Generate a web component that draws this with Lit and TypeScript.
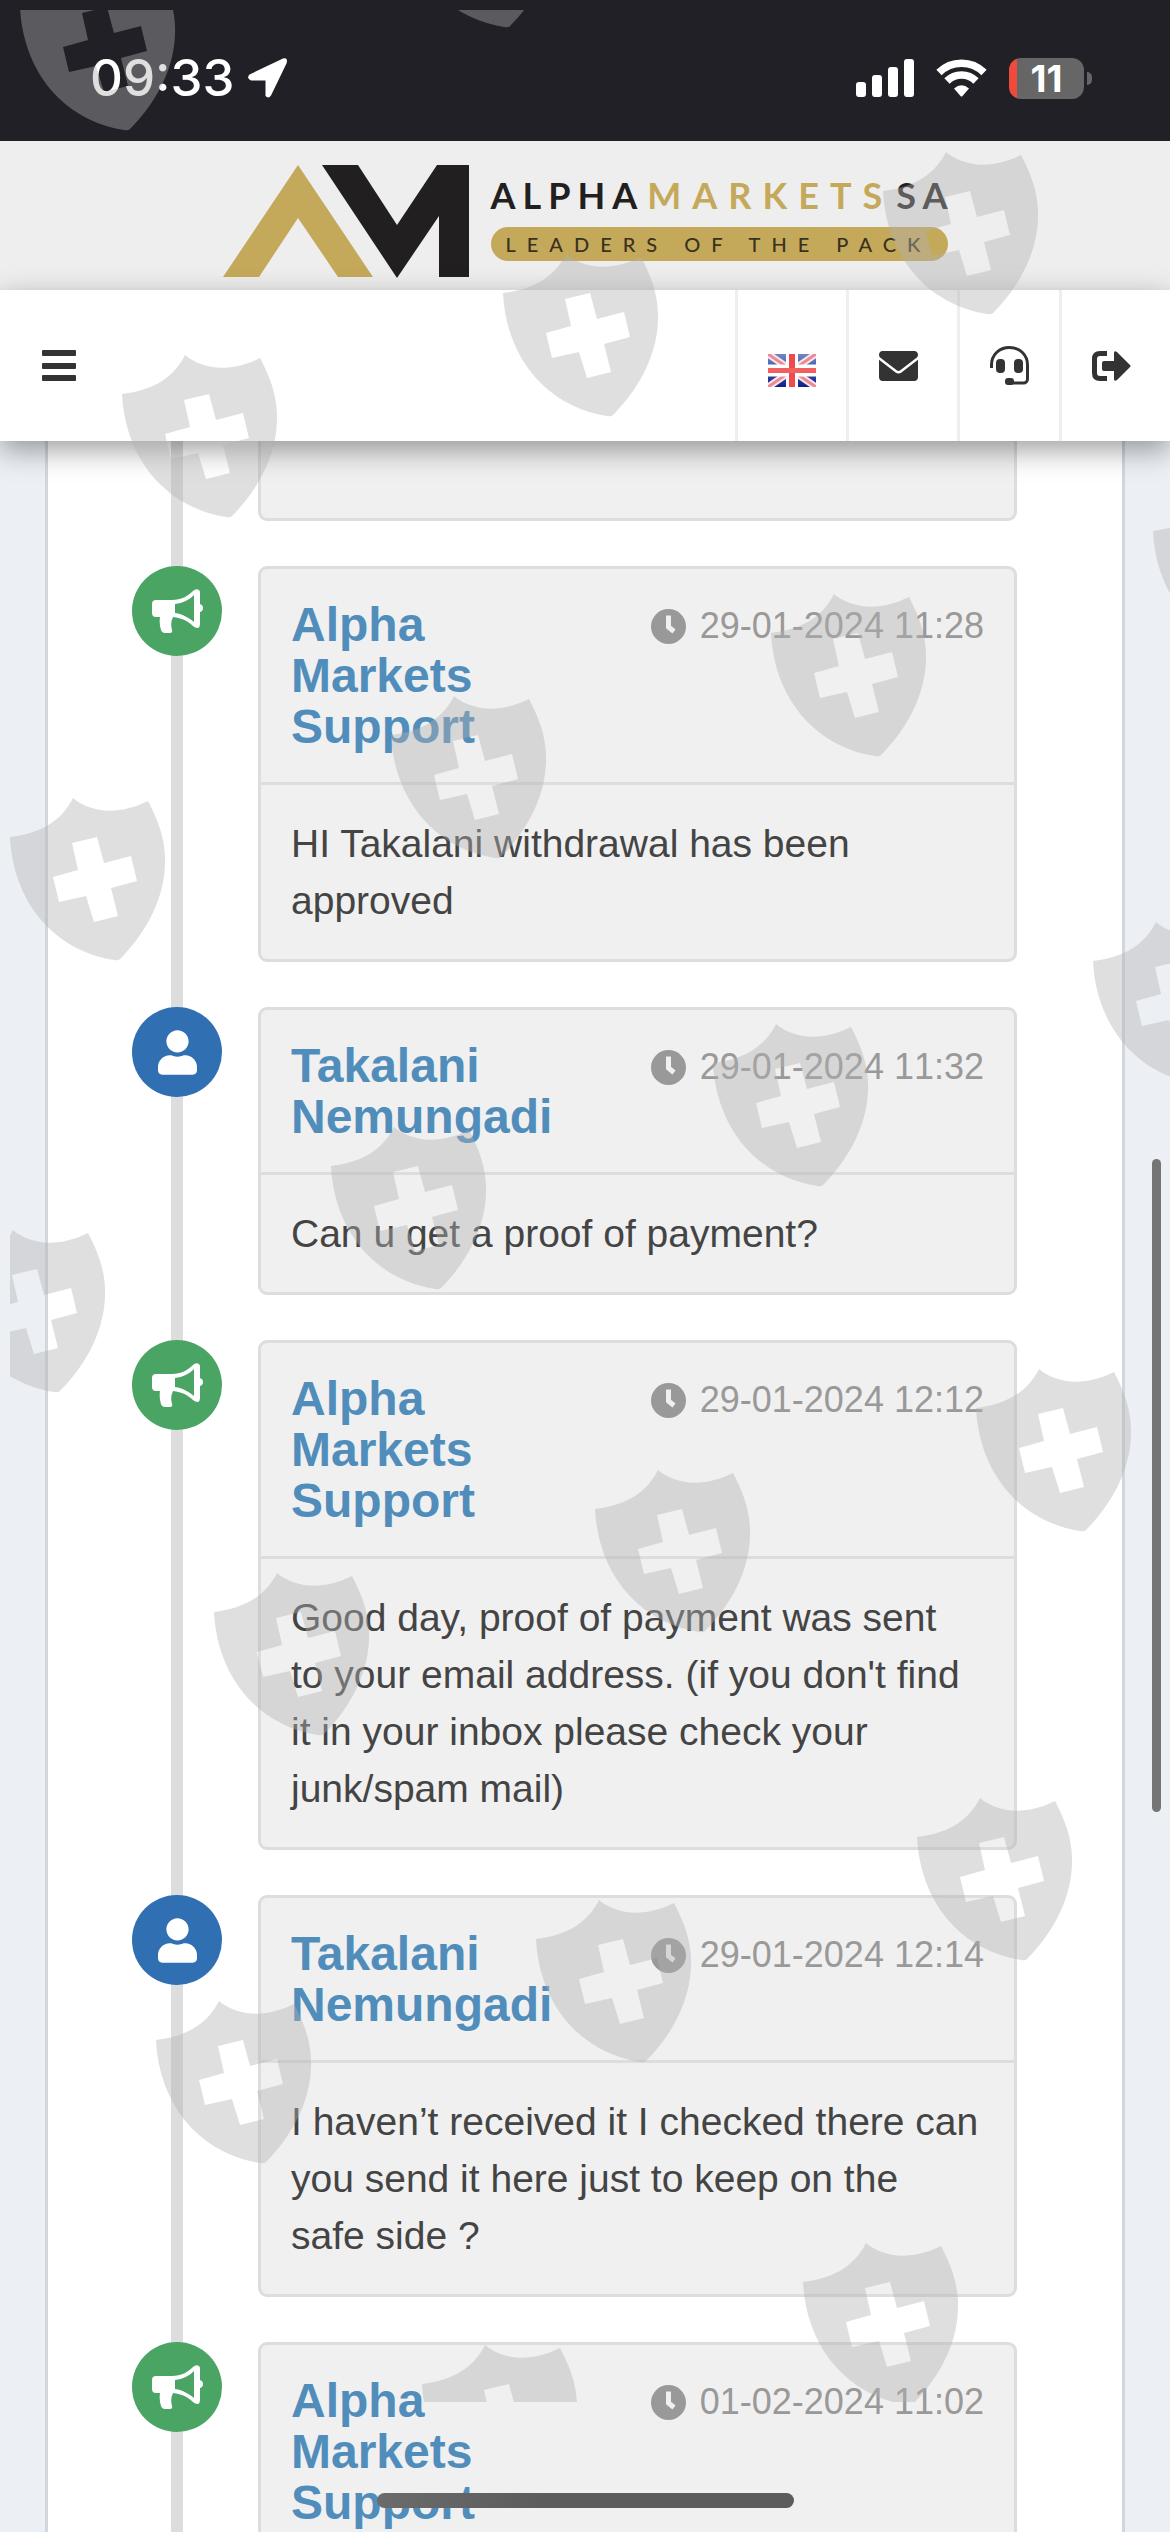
import { LitElement, html, svg, css } from "lit";
import { customElement, property } from "lit/decorators.js";

type Role = "support" | "client";

interface Message {
  role: Role;
  author: string;
  time: string;
  text: string;
}

const messages: Message[] = [
  {
    role: "support",
    author: "Alpha Markets Support",
    time: "29-01-2024 11:28",
    text: "HI Takalani withdrawal has been approved",
  },
  {
    role: "client",
    author: "Takalani Nemungadi",
    time: "29-01-2024 11:32",
    text: "Can u get a proof of payment?",
  },
  {
    role: "support",
    author: "Alpha Markets Support",
    time: "29-01-2024 12:12",
    text: "Good day, proof of payment was sent\nto your email address. (if you don't find\nit in your inbox please check your\njunk/spam mail)",
  },
  {
    role: "client",
    author: "Takalani Nemungadi",
    time: "29-01-2024 12:14",
    text: "I haven’t received it I checked there can\nyou send it here just to keep on the\nsafe side ?",
  },
  {
    role: "support",
    author: "Alpha Markets Support",
    time: "01-02-2024 11:02",
    text: "",
  },
];

const SHIELD =
  "M0 39C26 36 50 26 63 0C78 13 106 19 138 3C148 22 156 42 155 66C154 106 131 140 110 161Q108 163 104 162C42 152 3 102 0 39Z" +
  "M62 45L87 39L94 65L121 58L127 83L101 90L108 118L84 124L76 98L49 104L43 79L68 72Z";

/* Upper left corner of every shield of the watermark. */
const shields: Array<[number, number]> = [
  [20, -32], [400, -135], [883, 152], [503, 254], [122, 355],
  [1153, 492], [771, 594], [391, 696], [10, 798], [1093, 922],
  [713, 1024], [331, 1127], [-50, 1230], [976, 1369], [595, 1470],
  [214, 1573], [917, 1798], [536, 1900], [156, 2001], [803, 2243],
  [422, 2345],
];

@customElement("shield-watermark")
export class ShieldWatermark extends LitElement {
  static styles = css`
    :host {
      display: block;
      position: absolute;
      inset: 0;
      pointer-events: none;
    }
    .field {
      display: block;
      width: 100%;
      height: 100%;
      fill: #b1b1b1;
      fill-opacity: 0.41;
    }
  `;

  render() {
    return html`
      <svg class="field" aria-hidden="true">
        <defs>
          <clipPath id="area"><rect x="10" y="10" width="4000" height="2392" /></clipPath>
        </defs>
        <g clip-path="url(#area)" fill-rule="evenodd">
          ${shields.map(([x, y]) => svg`<path transform="translate(${x} ${y})" d=${SHIELD} />`)}
        </g>
      </svg>
    `;
  }
}

@customElement("status-bar")
export class StatusBar extends LitElement {
  static styles = css`
    :host {
      display: flex;
      align-items: center;
      justify-content: space-between;
      box-sizing: border-box;
      height: 141px;
      padding: 15px 78px 0 90px;
      background: #202026;
      color: #fff;
      font-family: Inter, "Liberation Sans", sans-serif;
    }
    .side {
      display: flex;
      align-items: center;
    }
    .time {
      margin-right: 14px;
      font-size: 51px;
      line-height: 60px;
      font-weight: 500;
    }
    .signal {
      margin-right: 22px;
    }
    .wifi {
      margin-right: 22px;
    }
    .battery {
      display: flex;
      align-items: center;
      justify-content: center;
      width: 75px;
      height: 41px;
      border-radius: 12px;
      background: linear-gradient(90deg, #f04b3a 8px, #666 8px);
      font-size: 37px;
      line-height: 41px;
      font-weight: 700;
    }
    .nub {
      width: 5px;
      height: 13px;
      margin-left: 3px;
      border-radius: 0 6px 6px 0;
      background: #666;
    }
    svg {
      display: block;
    }
  `;

  render() {
    return html`
      <div class="side">
        <span class="time">09:33</span>
        <svg width="39" height="40" viewBox="0 0 39 40" fill="#fff" aria-hidden="true">
          <path d="M35 .4Q40 -1 38.700 5L23 37.500Q20.500 41 17.500 38V22.500H3Q-2 20 1.500 16.500Z" />
        </svg>
      </div>
      <div class="side">
        <svg class="signal" width="58" height="38" viewBox="0 0 58 38" fill="#fff" aria-hidden="true">
          <rect x="0" y="23" width="10" height="15" rx="3" />
          <rect x="16" y="16" width="10" height="22" rx="3" />
          <rect x="32" y="8" width="10" height="30" rx="3" />
          <rect x="48" y="0" width="10" height="38" rx="3" />
        </svg>
        <svg class="wifi" width="51" height="38" viewBox="0 0 51 38" aria-hidden="true">
          <g fill="none" stroke="#fff" stroke-width="7.500">
            <path d="M3 13.500A32 32 0 0 1 48 13.500" />
            <path d="M11 22A20.500 20.500 0 0 1 40 22" />
          </g>
          <path fill="#fff" d="M18 29.500Q25.500 23 33 29.500L26.500 37Q25.500 38 24.500 37Z" />
        </svg>
        <span class="battery">11</span>
        <span class="nub"></span>
      </div>
    `;
  }
}

@customElement("brand-header")
export class BrandHeader extends LitElement {
  static styles = css`
    :host {
      display: flex;
      align-items: center;
      justify-content: center;
      gap: 22px;
      box-sizing: border-box;
      height: 149px;
      padding-top: 13px;
      background: #eee;
      font-family: Lato, "Liberation Sans", sans-serif;
      color: #221f20;
    }
    .mark {
      display: block;
      margin-bottom: 2px;
    }
    .words {
      display: flex;
      flex-direction: column;
      gap: 12px;
      width: 457px;
      margin-bottom: 8px;
    }
    .name {
      display: flex;
      justify-content: space-between;
      font-size: 36px;
      line-height: 40px;
      font-weight: 700;
      letter-spacing: 7px;
      white-space: nowrap;
    }
    .gold {
      color: #c5a95a;
      letter-spacing: 11px;
    }
    .last {
      margin-right: -7px;
    }
    .pill {
      box-sizing: border-box;
      height: 34px;
      padding-left: 15px;
      border-radius: 17px;
      background: #c5a95a;
      color: #3a3220;
      font-size: 20px;
      line-height: 34px;
      font-weight: 500;
      letter-spacing: 11px;
      white-space: nowrap;
    }
  `;

  render() {
    return html`
      <svg class="mark" width="246" height="113" viewBox="0 0 246 113" aria-hidden="true">
        <path fill="#c5a95a" d="M75 0L150 112H115L75 53L36 112H0Z" />
        <path fill="#221f20" d="M99 0H135L174 60L214 0H246V112H216V51L174 113Z" />
      </svg>
      <div class="words">
        <div class="name">
          <span>ALPHA</span><span class="gold">MARKETS</span><span class="last">SA</span>
        </div>
        <div class="pill">LEADERS OF THE PACK</div>
      </div>
    `;
  }
}

@customElement("nav-bar")
export class NavBar extends LitElement {
  static styles = css`
    :host {
      display: flex;
      justify-content: space-between;
      height: 151px;
      position: relative;
      background: #fff;
      box-shadow: 0 9px 27px rgba(0, 0, 0, 0.38);
    }
    button {
      display: flex;
      align-items: center;
      height: 151px;
      margin: 0;
      border: 0;
      background: none;
      color: #333;
      font: inherit;
    }
    .menu {
      padding: 0 42px;
    }
    .tools {
      display: grid;
      grid-template-columns: 111px 111px 102px 111px;
    }
    .tools button {
      padding: 0 0 0 30px;
      border-left: 3px solid #eee;
    }
    .flag {
      margin-top: 9px;
    }
    svg {
      display: block;
    }
  `;

  render() {
    return html`
      <button class="menu" aria-label="Menu">
        <svg width="34" height="32" viewBox="0 0 34 32" fill="#333">
          <rect y="0" width="34" height="6" rx="1" />
          <rect y="13" width="34" height="6" rx="1" />
          <rect y="25" width="34" height="6" rx="1" />
        </svg>
      </button>
      <div class="tools">
        <button aria-label="Language">
          <svg class="flag" width="48" height="33" viewBox="0 0 48 33">
            <defs>
              <linearGradient id="sky" x1="0" y1="0" x2="0" y2="1">
                <stop offset="0" stop-color="#6f86c6" />
                <stop offset="1" stop-color="#12208a" />
              </linearGradient>
            </defs>
            <rect width="48" height="33" fill="url(#sky)" />
            <path d="M0 0L48 33M48 0L0 33" stroke="#fbe4ea" stroke-width="7" />
            <path d="M0 0L48 33M48 0L0 33" stroke="#ec8a92" stroke-width="3" />
            <path d="M24 0V33M0 16.500H48" stroke="#fff" stroke-width="12" />
            <path d="M24 0V33" stroke="#ee4a50" stroke-width="6" />
            <path d="M0 16.500H48" stroke="#f0605f" stroke-width="5" />
          </svg>
        </button>
        <button aria-label="Messages">
          <svg width="39" height="30" viewBox="0 64 512 384" preserveAspectRatio="none" fill="#333">
            <path d="M48 64C21.500 64 0 85.500 0 112c0 15.100 7.100 29.300 19.200 38.400L236.800 313.600c11.400 8.500 27 8.500 38.400 0L492.800 150.400c12.100-9.100 19.200-23.300 19.200-38.400c0-26.500-21.500-48-48-48H48zM0 176V400c0 26 22 48 48 48H464c26 0 48-22 48-48V176L294.400 339.200c-22.800 17.100-54 17.100-76.800 0L0 176z" />
          </svg>
        </button>
        <button aria-label="Support">
          <svg width="39" height="39" viewBox="0 0 39 39" fill="#333">
            <path d="M1.500 22V19C1.500 9 9 1.500 19.500 1.500S37.500 9 37.500 19V33a4 4 0 0 1-4 4H20" fill="none" stroke="#333" stroke-width="3" />
            <rect x="6" y="13" width="9" height="14" rx="4" />
            <rect x="24" y="13" width="9" height="14" rx="4" />
            <rect x="15" y="32" width="9" height="7" rx="3" />
          </svg>
        </button>
        <button aria-label="Log out">
          <svg width="39" height="30" viewBox="0 0 39 30" fill="#333">
            <path d="M15 2.500H8Q2.500 2.500 2.500 8V22Q2.500 27.500 8 27.500H15" fill="none" stroke="#333" stroke-width="5" />
            <path d="M12 10H22V2Q22 -1 25 1L38 14Q39 15 38 16L25 29Q22 31 22 28V20H12Q10 20 10 18V12Q10 10 12 10Z" />
          </svg>
        </button>
      </div>
    `;
  }
}

@customElement("timeline-entry")
export class TimelineEntry extends LitElement {
  @property({ attribute: false }) message!: Message;

  static styles = css`
    :host {
      display: grid;
      grid-template-columns: 90px minmax(0, 1fr);
      column-gap: 36px;
      align-items: start;
    }
    .badge {
      display: flex;
      align-items: center;
      justify-content: center;
      width: 90px;
      height: 90px;
      border-radius: 50%;
    }
    .support {
      background: #4aa564;
    }
    .client {
      background: #306fb2;
    }
    .card {
      border: 3px solid #ddd;
      border-radius: 9px;
      background: #f0f0f0;
    }
    .head {
      display: flex;
      align-items: flex-start;
      gap: 48px;
      padding: 30px;
      border-bottom: 3px solid #ddd;
    }
    .author {
      flex: 1;
      min-width: 0;
      margin: 0;
      color: #518dbb;
      font-size: 48px;
      line-height: 51px;
      font-weight: 700;
    }
    .time {
      display: flex;
      align-items: center;
      gap: 14px;
      color: #999;
      font-size: 36px;
      line-height: 54px;
      font-kerning: none;
      white-space: nowrap;
    }
    .text {
      min-height: 57px;
      margin: 0;
      padding: 30px;
      color: #444;
      font-size: 39px;
      line-height: 57px;
      white-space: pre-line;
    }
    svg {
      display: block;
    }
  `;

  private icon(role: Role) {
    return role === "support"
      ? html`<svg width="51" height="45" viewBox="0 0 51 45" aria-hidden="true">
          <path
            fill="#fff"
            fill-rule="evenodd"
            d="M4 11H20C29 11 36 7 41 2Q44 -1 47 1Q48 2 48 4V15Q51 16 51 19T48 23V35Q48 38 46 39Q43 39 41 37C36 32 30 29 21 28Q18 34 20 41Q21 44 18 44H13Q10 44 9 41Q7 35 8 28H4Q0 28 0 24V15Q0 11 4 11ZM23 15V24C31 25 37 29 42 33V6C37 11 31 14 23 15Z"
          />
        </svg>`
      : html`<svg width="39" height="45" viewBox="0 0 448 512" aria-hidden="true">
          <path
            fill="#fff"
            d="M224 256c70.700 0 128-57.300 128-128S294.700 0 224 0 96 57.300 96 128s57.300 128 128 128zm89.600 32h-16.700c-22.200 10.200-46.900 16-72.900 16s-50.600-5.800-72.900-16h-16.700C60.200 288 0 348.200 0 422.400V464c0 26.500 21.500 48 48 48h352c26.500 0 48-21.500 48-48v-41.600c0-74.200-60.200-134.400-134.400-134.400z"
          />
        </svg>`;
  }

  render() {
    const { role, author, time, text } = this.message;
    return html`
      <span class="badge ${role}">${this.icon(role)}</span>
      <article class="card">
        <header class="head">
          <h3 class="author">${author}</h3>
          <span class="time">
            <svg width="35" height="35" viewBox="0 0 35 35" aria-hidden="true">
              <circle cx="17.500" cy="17.500" r="17.500" fill="#999" />
              <path d="M17.500 6.500V18L23 22.500" fill="none" stroke="#f0f0f0" stroke-width="5" />
            </svg>
            <span>${time}</span>
          </span>
        </header>
        <p class="text">${text}</p>
      </article>
    `;
  }
}

@customElement("app-root")
export class AppRoot extends LitElement {
  static styles = css`
    :host {
      display: flex;
      flex-direction: column;
      position: relative;
      height: 100vh;
      overflow: hidden;
      background: #ecf0f5;
      font-family: "Liberation Sans", Arial, sans-serif;
    }
    .top {
      position: relative;
      z-index: 1;
      flex: none;
    }
    .page {
      flex: 1;
      min-height: 0;
      overflow: hidden;
      padding: 0 45px;
    }
    .timeline {
      display: flex;
      flex-direction: column;
      gap: 45px;
      padding: 0 105px 45px 84px;
      border: solid #d2d6de;
      border-width: 0 3px;
      background: linear-gradient(#ddd, #ddd) 123px 0 / 12px 100% no-repeat #fff;
    }
    .previous {
      box-sizing: border-box;
      height: 80px;
      margin-left: 126px;
      border: 3px solid #ddd;
      border-top: 0;
      border-radius: 0 0 9px 9px;
      background: #f0f0f0;
    }
    shield-watermark {
      z-index: 2;
    }
    .scroll-thumb {
      position: absolute;
      z-index: 3;
      top: 1159px;
      right: 9px;
      width: 9px;
      height: 653px;
      border-radius: 5px;
      background: #757576;
    }
    .home {
      position: absolute;
      z-index: 3;
      bottom: 24px;
      left: 50%;
      width: 417px;
      height: 15px;
      margin-left: -208px;
      border-radius: 8px;
      background: linear-gradient(90deg, #6b6b6b, #5c5c5c 40%);
    }
  `;

  render() {
    return html`
      <div class="top">
        <status-bar></status-bar>
        <brand-header></brand-header>
        <nav-bar></nav-bar>
      </div>
      <main class="page">
        <section class="timeline">
          <div class="previous"></div>
          ${messages.map((m) => html`<timeline-entry .message=${m}></timeline-entry>`)}
        </section>
      </main>
      <shield-watermark></shield-watermark>
      <div class="scroll-thumb"></div>
      <div class="home"></div>
    `;
  }
}
